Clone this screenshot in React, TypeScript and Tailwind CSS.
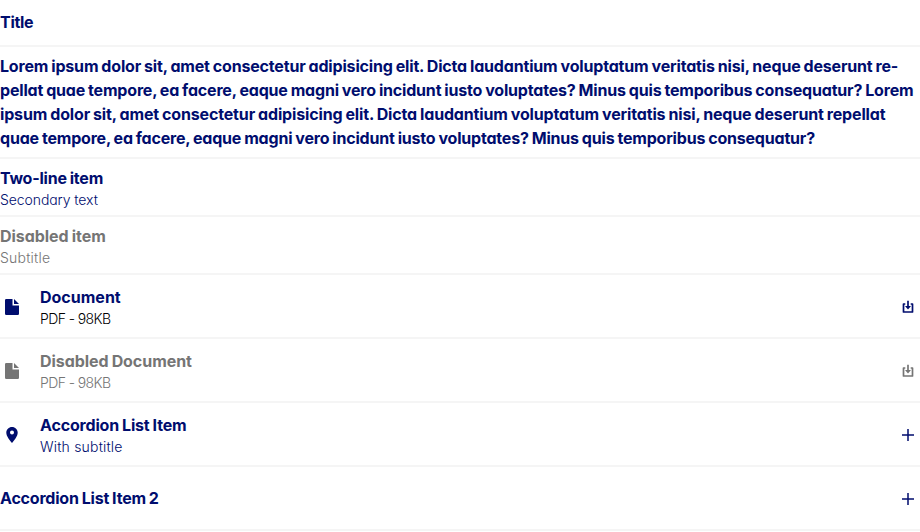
import type { ReactNode } from "react";

const bold = "block whitespace-nowrap text-[16px] leading-6 font-bold [word-spacing:-0.6px]";
const light = "block whitespace-nowrap text-[14px] leading-5 font-[360]";

function Row({ className, children }: { className: string; children: ReactNode }) {
  return <li className={`flex items-center border-b-2 border-[#f5f5f5] ${className}`}>{children}</li>;
}

function FileIcon() {
  return (
    <svg className="block h-6 w-6 shrink-0" viewBox="0 0 24 24" fill="currentColor">
      <path d="M6.2 4H12.5V10.5H19V18.8Q19 20 17.8 20H6.2Q5 20 5 18.8V5.2Q5 4 6.2 4Z" />
      <path d="M14 4L19 9H14Z" />
    </svg>
  );
}

function PinIcon() {
  return (
    <svg className="block h-6 w-6 shrink-0" viewBox="0 0 24 24" fill="currentColor">
      <path
        fillRule="evenodd"
        d="M12 4C8.8 4 6.3 6.5 6.3 9.6C6.3 13.4 9.8 17.5 12 20C14.2 17.5 17.7 13.4 17.7 9.6C17.7 6.5 15.2 4 12 4ZM12 7.6A2 2 0 1 1 12 11.6A2 2 0 0 1 12 7.6Z"
      />
    </svg>
  );
}

function DownloadIcon() {
  return (
    <svg className="block h-6 w-6 shrink-0" viewBox="0 0 24 24" fill="none" stroke="currentColor" strokeWidth="1.7">
      <path d="M9.3 9H7.5V17H16.5V9H14.7" strokeLinejoin="round" />
      <path d="M12 5.8V12" />
      <path d="M9 11H15L12 14.6Z" fill="currentColor" stroke="none" />
    </svg>
  );
}

function PlusIcon() {
  return (
    <svg className="block h-6 w-6 shrink-0" viewBox="0 0 24 24" fill="none" stroke="currentColor" strokeWidth="1.5">
      <path d="M12 6V18M6 12H18" />
    </svg>
  );
}

export default function App() {
  return (
    <ul className="h-[532px] w-[920px] overflow-hidden bg-white font-['Inter',sans-serif] text-[#000d6e] [font-feature-settings:'cv11']">
      <Row className="h-[47px] pb-[2px]">
        <span className={`${bold} tracking-[-0.3px]`}>Title</span>
      </Row>
      <Row className="h-[112px]">
        <p>
          <span className={`${bold} tracking-[-0.174px]`}>Lorem ipsum dolor sit, amet consectetur adipisicing elit. Dicta laudantium voluptatum veritatis nisi, neque deserunt re-</span>
          <span className={`${bold} tracking-[-0.184px]`}>pellat quae tempore, ea facere, eaque magni vero incidunt iusto voluptates? Minus quis temporibus consequatur? Lorem</span>
          <span className={`${bold} tracking-[-0.152px]`}>ipsum dolor sit, amet consectetur adipisicing elit. Dicta laudantium voluptatum veritatis nisi, neque deserunt repellat</span>
          <span className={`${bold} tracking-[-0.195px]`}>quae tempore, ea facere, eaque magni vero incidunt iusto voluptates? Minus quis temporibus consequatur?</span>
        </p>
      </Row>
      <Row className="h-[58px] pt-[2px]">
        <div>
          <span className={`${bold} tracking-[-0.22px]`}>Two-line item</span>
          <span className={`${light} tracking-[-0.08px]`}>Secondary text</span>
        </div>
      </Row>
      <Row className="h-[58px] pt-[2px] text-[#757575]">
        <div>
          <span className={`${bold} tracking-[-0.05px]`}>Disabled item</span>
          <span className={`${light} tracking-[0.22px]`}>Subtitle</span>
        </div>
      </Row>
      <Row className="h-16 pt-[2px]">
        <FileIcon />
        <div className="ml-4 grow">
          <span className={bold}>Document</span>
          <span className={`${light} tracking-[-0.6px]`}>
            <span className="text-black">PDF - 98KB</span>
          </span>
        </div>
        <DownloadIcon />
      </Row>
      <Row className="h-16 pt-[2px] text-[#757575]">
        <FileIcon />
        <div className="ml-4 grow">
          <span className={`${bold} tracking-[-0.06px]`}>Disabled Document</span>
          <span className={`${light} tracking-[-0.6px]`}>PDF - 98KB</span>
        </div>
        <DownloadIcon />
      </Row>
      <Row className="h-16 pt-[2px]">
        <PinIcon />
        <div className="ml-4 grow">
          <span className={`${bold} tracking-[-0.17px]`}>Accordion List Item</span>
          <span className={`${light} tracking-[0.2px]`}>With subtitle</span>
        </div>
        <PlusIcon />
      </Row>
      <Row className="h-16 pt-[2px]">
        <span className={`${bold} grow pb-[2px] tracking-[-0.2px]`}>Accordion List Item 2</span>
        <PlusIcon />
      </Row>
    </ul>
  );
}
